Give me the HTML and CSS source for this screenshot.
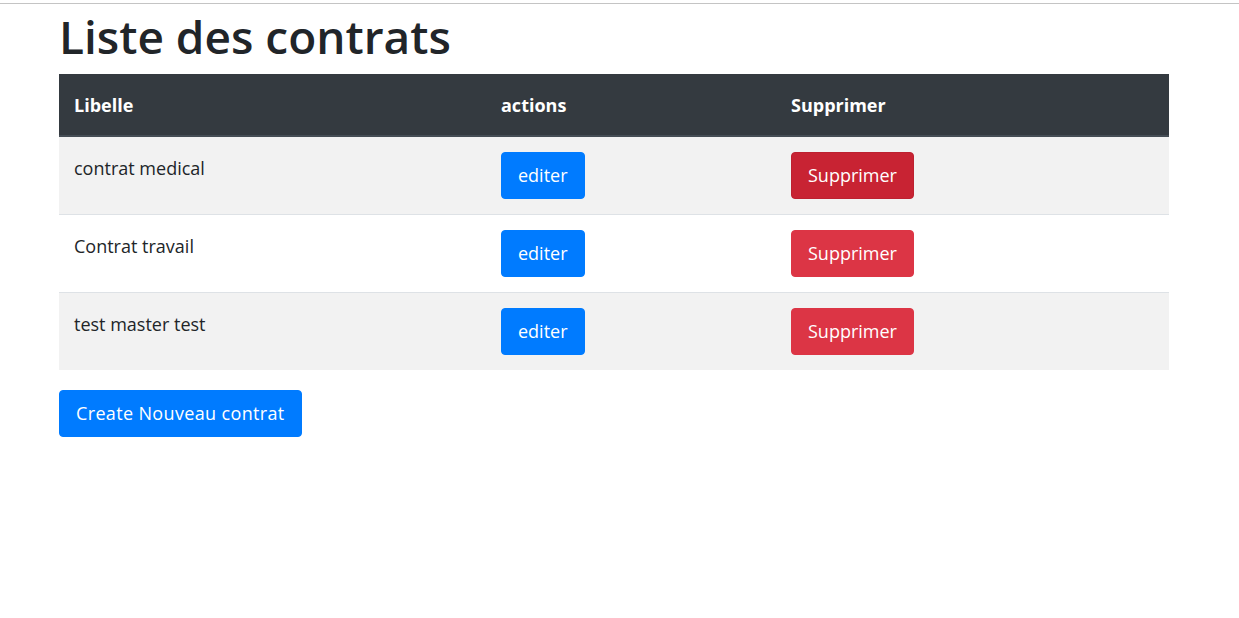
FILE: index.html
```html
<!DOCTYPE html>
<html lang="fr">
<head>
<meta charset="utf-8">
<title>Liste des contrats</title>
<link rel="stylesheet" href="styles.css">
</head>
<body>
<div class="topline"></div>
<main class="container">
  <h1 class="title">Liste des contrats</h1>
  <table class="table">
    <thead>
      <tr>
        <th class="col-libelle">Libelle</th>
        <th class="col-actions">actions</th>
        <th class="col-suppr">Supprimer</th>
      </tr>
    </thead>
    <tbody>
      <tr class="odd">
        <td class="label-cell">contrat medical</td>
        <td><a class="btn btn-primary" href="#">editer</a></td>
        <td><button class="btn btn-danger is-hover" type="button">Supprimer</button></td>
      </tr>
      <tr>
        <td class="label-cell">Contrat travail</td>
        <td><a class="btn btn-primary" href="#">editer</a></td>
        <td><button class="btn btn-danger" type="button">Supprimer</button></td>
      </tr>
      <tr class="odd">
        <td class="label-cell">test master test</td>
        <td><a class="btn btn-primary" href="#">editer</a></td>
        <td><button class="btn btn-danger" type="button">Supprimer</button></td>
      </tr>
    </tbody>
  </table>
  <a class="btn btn-primary btn-create" href="#">Create Nouveau contrat</a>
</main>
</body>
</html>
```

FILE: styles.css
```css
html, body {
  margin: 0;
  padding: 0;
  background: #fff;
}
body {
  font-family: "Open Sans", "Noto Sans", sans-serif;
  font-size: 18px;
  line-height: 1.5;
  color: #212529;
}
.topline {
  height: 1px;
  margin-top: 3px;
  background: #c4c4c4;
}
.container {
  width: 1110px;
  margin-left: 59px;
}
.title {
  margin: 0;
  font-size: 46px;
  font-weight: 600;
  line-height: 55px;
  padding-top: 5px;
  padding-bottom: 10px;
  color: #212529;
}
.table {
  width: 100%;
  border-collapse: collapse;
  margin-bottom: 20px;
}
.table th,
.table td {
  padding: 15px 15px;
  text-align: left;
  vertical-align: top;
  border-top: 1px solid #dee2e6;
}
.table thead th {
  background: #343a40;
  color: #fff;
  font-weight: 700;
  border-top: 1px solid #343a40;
  border-bottom: 2px solid #454d55;
  padding-top: 17px;
  padding-bottom: 16px;
}
.col-libelle { width: 397px; }
.col-actions { width: 260px; }
.table tbody tr.odd { background: #f2f2f2; }
.table tbody tr:first-child td { border-top: 0; }
.table td.label-cell {
  padding-top: 18px;
  padding-bottom: 12px;
}
.btn {
  display: inline-block;
  font-family: inherit;
  font-size: 18px;
  line-height: 27px;
  padding: 9px 16px;
  border: 1px solid transparent;
  border-radius: 4px;
  color: #fff;
  text-decoration: none;
  cursor: pointer;
  vertical-align: middle;
}
.btn-primary {
  background: #007bff;
  border-color: #007bff;
}
.btn-danger {
  background: #dc3545;
  border-color: #dc3545;
}
.btn-danger.is-hover {
  background: #c82333;
  border-color: #bd2130;
}
.btn-create {
  letter-spacing: 0.35px;
}
```
